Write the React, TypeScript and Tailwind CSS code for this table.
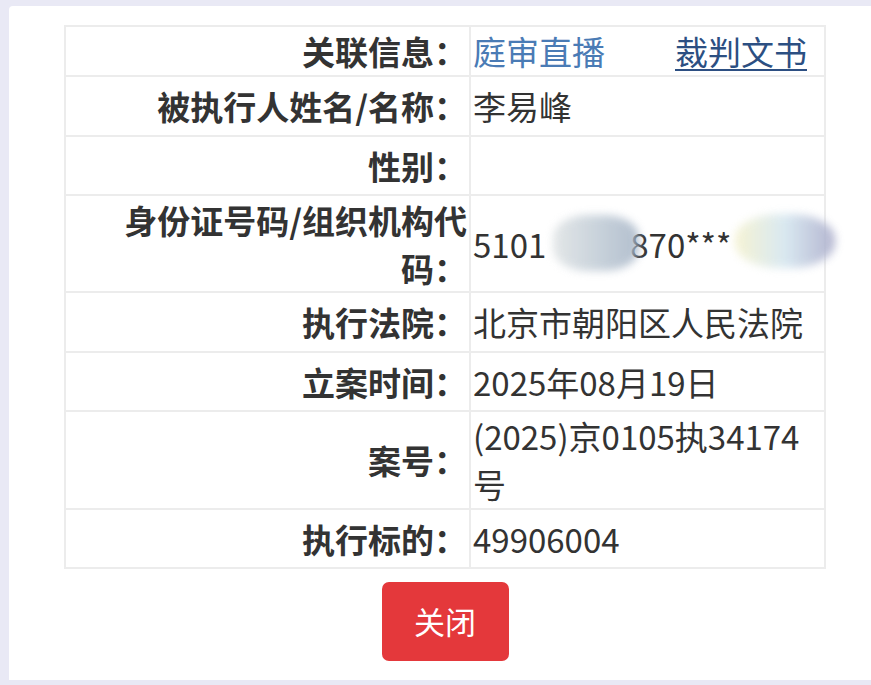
import React from 'react';

type Row = {
  label: React.ReactNode;
  value: React.ReactNode;
  height: string;
};

const IdNumber: React.FC = () => (
  <div className="relative whitespace-nowrap">
    <span>5101</span>
    <span className="inline-block w-[84px]" />
    <span>870***</span>
    {/* privacy smudges */}
    <div className="absolute left-[80px] top-[-5px] w-[86px] h-[56px] rounded-[40%] bg-gradient-to-r from-[#dfe3e4] via-[#c1ccd6] to-[#a5b4c6] opacity-85 blur-[4px]" />
    <div className="absolute left-[262px] top-[-6px] w-[100px] h-[54px] rounded-[45%] bg-gradient-to-r from-[#f4f1cc] via-[#d3e5ef] to-[#a7a9c8] opacity-85 blur-[4px]" />
  </div>
);

const rows: Row[] = [
  {
    label: '关联信息：',
    height: 'h-[48px]',
    value: (
      <div className="flex items-center gap-[70px] whitespace-nowrap">
        <a className="text-[#4a7bb5] no-underline">庭审直播</a>
        <a className="text-[#2c4f82] underline underline-offset-4 decoration-2">裁判文书</a>
      </div>
    )
  },
  { label: '被执行人姓名/名称：', value: '李易峰', height: 'h-[60px]' },
  { label: '性别：', value: '', height: 'h-[59px]' },
  {
    label: (
      <>
        身份证号码/组织机构代
        <br />
        码：
      </>
    ),
    value: <IdNumber />,
    height: 'h-[97px]'
  },
  { label: '执行法院：', value: '北京市朝阳区人民法院', height: 'h-[60px]' },
  { label: '立案时间：', value: '2025年08月19日', height: 'h-[59px]' },
  {
    label: '案号：',
    value: (
      <>
        (2025)京0105执34174
        <br />
        号
      </>
    ),
    height: 'h-[98px]'
  },
  { label: '执行标的：', value: '49906004', height: 'h-[59px]' }
];

const App: React.FC = () => {
  return (
    <div
      className="w-[871px] h-[685px] overflow-hidden bg-[#e9e9f5] pl-[9px] pt-[6px]"
      style={{ fontFamily: '"Noto Sans CJK SC", "Noto Sans", sans-serif' }}
    >
      <div className="h-[674px] bg-white rounded-tl-[4px] pl-[55px] pt-[19px]">
        {/* Detail table */}
        <div className="w-[762px] border-2 border-[#ececec] text-[33px] leading-[48px] text-[#333]">
          {rows.map((row, i) => (
            <div
              key={i}
              className={`flex ${row.height} ${i > 0 ? 'border-t-2 border-[#ececec]' : ''}`}
            >
              <div className="w-[405px] shrink-0 flex items-center justify-end text-right font-bold pr-[2px] border-r-2 border-[#ececec]">
                <div>{row.label}</div>
              </div>
              <div className="flex-1 flex items-center pl-[2px] pr-[18px]">
                <div>{row.value}</div>
              </div>
            </div>
          ))}
        </div>

        {/* Close button */}
        <div className="w-[762px] flex justify-center mt-[13px]">
          <button className="w-[127px] h-[79px] rounded-[7px] bg-[#e4383b] text-white text-[31px]">
            关闭
          </button>
        </div>
      </div>
    </div>
  );
};

export default App;
